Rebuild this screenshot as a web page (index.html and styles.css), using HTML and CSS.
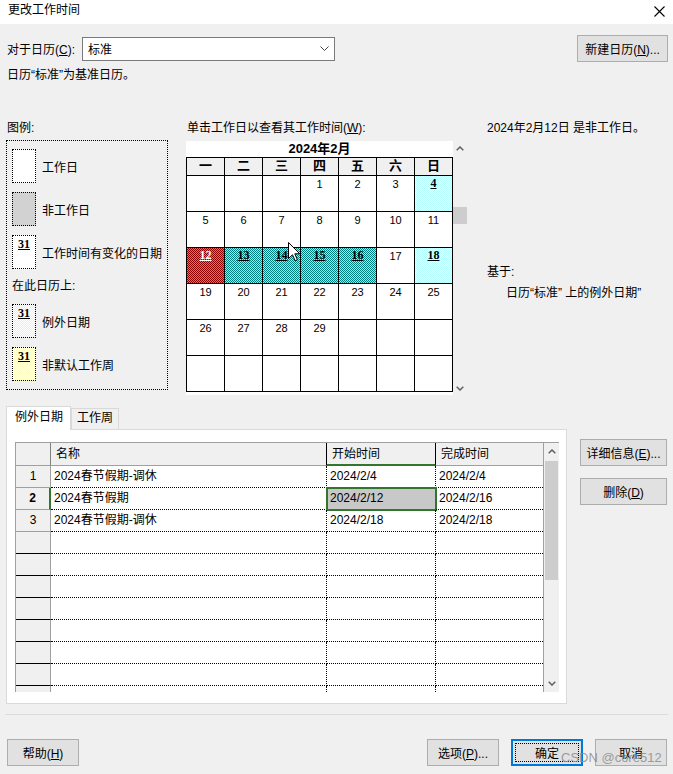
FILE: index.html
```html
<!DOCTYPE html>
<html lang="zh-CN">
<head>
  <meta charset="UTF-8" />
  <title>更改工作时间</title>
  <link rel="stylesheet" href="styles.css">
</head>
<body>
<div class="window">

  <!-- title bar -->
  <div class="titlebar">
    <span class="title">更改工作时间</span>
    <svg class="close" width="11" height="11" viewBox="0 0 11 11"><path d="M0.5 0.5 L10.5 10.5 M10.5 0.5 L0.5 10.5" stroke="#000" stroke-width="1.1" fill="none"/></svg>
  </div>

  <div class="dialog">
    <div class="cal-row">
      <span class="lbl">对于日历(<u>C</u>):</span>
      <div class="combo">
        <span>标准</span>
        <svg width="9" height="5" viewBox="0 0 9 5"><path d="M0.5 0.5 L4.5 4.5 L8.5 0.5" stroke="#444" stroke-width="1" fill="none"/></svg>
      </div>
      <button class="btn new-cal">新建日历(<u>N</u>)...</button>
    </div>
    <div class="note">日历“标准”为基准日历。</div>

    <div class="middle">
      <!-- legend -->
      <div class="legend-col">
        <div class="cap">图例:</div>
        <div class="legend">
          <div class="item"><span class="sw"></span>工作日</div>
          <div class="item"><span class="sw gray"></span>非工作日</div>
          <div class="item"><span class="sw"><b>31</b></span>工作时间有变化的日期</div>
          <div class="on-cal">在此日历上:</div>
          <div class="item"><span class="sw cyan"><b>31</b></span>例外日期</div>
          <div class="item"><span class="sw yellow"><b>31</b></span>非默认工作周</div>
        </div>
      </div>

      <!-- calendar -->
      <div class="cal-col">
        <div class="cap">单击工作日以查看其工作时间(<u>W</u>):</div>
        <div class="cal-wrap">
          <div class="cal">
            <div class="month">2024年2月</div>
            <div class="grid">
              <div class="wd">一</div><div class="wd">二</div><div class="wd">三</div><div class="wd">四</div><div class="wd">五</div><div class="wd">六</div><div class="wd">日</div>

              <div class="d"></div><div class="d"></div><div class="d"></div><div class="d">1</div><div class="d">2</div><div class="d">3</div><div class="d ex cyan">4</div>
              <div class="d">5</div><div class="d">6</div><div class="d">7</div><div class="d">8</div><div class="d">9</div><div class="d">10</div><div class="d">11</div>
              <div class="d ex red">12</div><div class="d ex teal">13</div><div class="d ex teal">14</div><div class="d ex teal">15</div><div class="d ex teal">16</div><div class="d">17</div><div class="d ex cyan">18</div>
              <div class="d">19</div><div class="d">20</div><div class="d">21</div><div class="d">22</div><div class="d">23</div><div class="d">24</div><div class="d">25</div>
              <div class="d">26</div><div class="d">27</div><div class="d">28</div><div class="d">29</div><div class="d"></div><div class="d"></div><div class="d"></div>
              <div class="d"></div><div class="d"></div><div class="d"></div><div class="d"></div><div class="d"></div><div class="d"></div><div class="d"></div>
            </div>
            <svg class="cursor" width="13" height="20" viewBox="0 0 13 20"><path d="M0.5 0.5 L0.5 16.5 L4.5 12.8 L7.2 18.8 L9.4 17.8 L6.8 11.8 L11.8 11.8 Z" fill="#fff" stroke="#000" stroke-width="1"/></svg>
          </div>
          <div class="cal-scroll">
            <div class="arr"><svg width="8" height="5" viewBox="0 0 8 5"><path d="M0.7 4.3 L4 1 L7.3 4.3" stroke="#606060" stroke-width="1.5" fill="none"/></svg></div>
            <div class="thumb"></div>
            <div class="fill"></div>
            <div class="arr"><svg width="8" height="5" viewBox="0 0 8 5"><path d="M0.7 0.7 L4 4 L7.3 0.7" stroke="#606060" stroke-width="1.5" fill="none"/></svg></div>
          </div>
        </div>
      </div>

      <!-- selected date info -->
      <div class="info-col">
        <div class="line">2024年2月12日 是非工作日。</div>
        <div class="line based">基于:</div>
        <div class="line indent">日历“标准” 上的例外日期”</div>
      </div>
    </div>

    <!-- exceptions tab -->
    <div class="tab-row">
      <div class="tab-area">
        <div class="tabs">
          <div class="tab active">例外日期</div>
          <div class="tab">工作周</div>
        </div>
        <div class="panel">
          <div class="tbl-box">
            <div class="tbl">
              <div class="th corner"></div>
              <div class="th">名称</div>
              <div class="th cur">开始时间</div>
              <div class="th last">完成时间</div>

              <div class="rh">1</div>
              <div class="td">2024春节假期-调休</div>
              <div class="td">2024/2/4</div>
              <div class="td last">2024/2/4</div>

              <div class="rh sel">2</div>
              <div class="td">2024春节假期</div>
              <div class="td active">2024/2/12</div>
              <div class="td last">2024/2/16</div>

              <div class="rh">3</div>
              <div class="td">2024春节假期-调休</div>
              <div class="td">2024/2/18</div>
              <div class="td last">2024/2/18</div>

              <div class="rh empty"></div><div class="td"></div><div class="td"></div><div class="td last"></div>
              <div class="rh empty"></div><div class="td"></div><div class="td"></div><div class="td last"></div>
              <div class="rh empty"></div><div class="td"></div><div class="td"></div><div class="td last"></div>
              <div class="rh empty"></div><div class="td"></div><div class="td"></div><div class="td last"></div>
              <div class="rh empty"></div><div class="td"></div><div class="td"></div><div class="td last"></div>
              <div class="rh empty"></div><div class="td"></div><div class="td"></div><div class="td last"></div>
              <div class="rh empty"></div><div class="td"></div><div class="td"></div><div class="td last"></div>
              <div class="rh empty"></div><div class="td"></div><div class="td"></div><div class="td last"></div>
            </div>
            <div class="vbar">
              <div class="arr"><svg width="8" height="5" viewBox="0 0 8 5"><path d="M0.7 4.3 L4 1 L7.3 4.3" stroke="#606060" stroke-width="1.5" fill="none"/></svg></div>
              <div class="thumb"></div>
              <div class="fill"></div>
              <div class="arr"><svg width="8" height="5" viewBox="0 0 8 5"><path d="M0.7 0.7 L4 4 L7.3 0.7" stroke="#606060" stroke-width="1.5" fill="none"/></svg></div>
            </div>
          </div>
        </div>
      </div>
      <div class="side-btns">
        <button class="btn">详细信息(<u>E</u>)...</button>
        <button class="btn">删除(<u>D</u>)</button>
      </div>
    </div>

    <div class="sep"></div>

    <div class="footer">
      <button class="btn">帮助(<u>H</u>)</button>
      <div class="footer-right">
        <button class="btn">选项(<u>P</u>)...</button>
        <button class="btn default">确定</button>
        <button class="btn">取消</button>
      </div>
    </div>
  </div>

  <div class="watermark">CSDN @core512</div>
</div>
</body>
</html>
```

FILE: styles.css
```css
* {
  box-sizing: border-box;
}

body {
  margin: 0;
  background: #f0f0f0;
  font-family: "Liberation Sans", "Noto Sans CJK SC", sans-serif;
  font-size: 12px;
  color: #000;
}

.window {
  position: relative;
  width: 673px;
  height: 774px;
  overflow: hidden;
  background: #f0f0f0;
}

/* Title bar */
.titlebar {
  height: 24px;
  background: #fff;
  display: flex;
  align-items: center;
  justify-content: space-between;
  padding: 0 8px 4px 8px;
}

.title {
  line-height: 16px;
}

.close {
  margin-top: 2px;
}

.dialog {
  padding: 11px 5px 0 6px;
}

/* Calendar selector */
.cal-row {
  display: flex;
  align-items: center;
  height: 27px;
}

.lbl {
  width: 76px;
  padding-left: 1px;
}

.combo {
  width: 253px;
  height: 24px;
  background: #fff;
  border: 1px solid #7a7a7a;
  display: flex;
  align-items: center;
  justify-content: space-between;
  padding: 0 5px 0 5px;
}

.btn {
  font: inherit;
  color: #000;
  background: #e1e1e1;
  border: 1px solid #adadad;
  height: 27px;
  width: 72px;
  padding: 0;
  position: relative;
}

.new-cal {
  margin-left: auto;
  width: 91px;
}

.note {
  margin-top: 5px;
  padding-left: 1px;
  line-height: 16px;
}

/* Middle section */
.middle {
  display: flex;
  margin-top: 37px;
  height: 275px;
}

.cap {
  line-height: 16px;
  padding-left: 1px;
}

.legend-col {
  width: 162px;
}

.legend {
  margin-top: 4px;
  height: 250px;
  border: 1px dotted #000;
  padding: 8px 5px;
  display: flex;
  flex-direction: column;
  gap: 9px;
}

.item {
  display: flex;
  align-items: center;
  height: 34px;
  gap: 6px;
}

.sw {
  width: 24px;
  height: 34px;
  flex-shrink: 0;
  border: 1px dotted #000;
  background: #fff;
  text-align: center;
  padding-top: 1px;
}

.sw b {
  font-family: "Liberation Serif", serif;
  font-size: 12px;
  line-height: 12px;
  text-decoration: underline;
}

.sw.gray {
  background: #d2d2d2;
}

.sw.cyan {
  background: repeating-conic-gradient(#c0ffff 0 25%, #fff 0 50%) 0 0 / 2px 2px;
}

.sw.yellow {
  background: repeating-conic-gradient(#ffffc8 0 25%, #fff 0 50%) 0 0 / 2px 2px;
}

.on-cal {
  height: 17px;
  line-height: 17px;
}

/* Calendar */
.cal-col {
  width: 281px;
  margin-left: 18px;
}

.cal-wrap {
  display: flex;
  margin-top: 5px;
  height: 254px;
}

.cal {
  position: relative;
  width: 267px;
  background: #fff;
}

.month {
  height: 16px;
  line-height: 16px;
  text-align: center;
  font-weight: bold;
  font-size: 13px;
}

.grid {
  display: grid;
  grid-template-columns: repeat(7, 38px);
  grid-template-rows: 18px repeat(6, 36px);
  border-top: 1px solid #000;
  border-left: 1px solid #000;
}

.grid > div {
  border-right: 1px solid #000;
  border-bottom: 1px solid #000;
  text-align: center;
}

.wd {
  font-weight: bold;
  font-size: 13px;
  line-height: 16px;
  background: #f0f0f0;
}

.d {
  font-size: 11px;
  line-height: 12px;
  padding-top: 2px;
}

.d.ex {
  font-family: "Liberation Serif", serif;
  font-weight: bold;
  font-size: 12px;
  text-decoration: underline;
  padding-top: 1px;
}

.cyan {
  background: repeating-conic-gradient(#b4ffff 0 25%, #fff 0 50%) 0 0 / 2px 2px;
}

.teal {
  background: repeating-conic-gradient(#008080 0 25%, #a0e8e8 0 50%) 0 0 / 2px 2px;
}

.red {
  background: repeating-conic-gradient(#8c0000 0 25%, #e07070 0 50%) 0 0 / 2px 2px;
  color: #fff;
}

.cursor {
  position: absolute;
  left: 102px;
  top: 101px;
}

.cal-scroll {
  width: 15px;
  display: flex;
  flex-direction: column;
}

.arr {
  height: 14px;
  display: flex;
  align-items: center;
  justify-content: center;
}

.cal-scroll .thumb {
  margin-top: 52px;
  height: 17px;
  background: #cdcdcd;
}

.fill {
  flex: 1;
}

/* Info */
.info-col {
  margin-left: 20px;
  flex: 1;
}

.line {
  line-height: 16px;
}

.based {
  margin-top: 128px;
}

.indent {
  margin-top: 5px;
  padding-left: 19px;
}

/* Tabs */
.tab-row {
  display: flex;
  gap: 13px;
  margin-top: 10px;
}

.tab-area {
  width: 561px;
}

.tabs {
  display: flex;
  align-items: flex-end;
  height: 24px;
}

.tab {
  height: 21px;
  line-height: 19px;
  padding: 0 5px;
  border: 1px solid #d9d9d9;
  border-bottom: none;
  background: #f0f0f0;
}

.tab.active {
  height: 24px;
  line-height: 21px;
  padding: 0 7px 0 8px;
  background: #fff;
  margin-bottom: -1px;
  position: relative;
  z-index: 1;
}

.panel {
  height: 275px;
  background: #fff;
  border: 1px solid #d9d9d9;
  padding: 12px 0 0 8px;
}

.tbl-box {
  display: flex;
  width: 544px;
  height: 250px;
  overflow: hidden;
  border-top: 1px solid #a0a0a0;
  border-left: 1px solid #a0a0a0;
}

.tbl {
  display: grid;
  grid-template-columns: 35px 276px 109px 107px;
  grid-template-rows: 23px;
  grid-auto-rows: 22px;
  align-content: start;
}

.tbl > div {
  line-height: 21px;
  white-space: nowrap;
  overflow: hidden;
}

.th {
  background: #f0f0f0;
  border-right: 1px solid #000;
  border-bottom: 1px solid #a0a0a0;
  padding-left: 5px;
  line-height: 22px !important;
}

.th.corner {
  border-right: 1px solid #808080;
}

.th.cur {
  border-bottom: 2px solid #31752f;
}

.rh {
  background: #f0f0f0;
  text-align: center;
  border-right: 1px solid #a0a0a0;
  border-bottom: 1px solid #a0a0a0;
}

.rh.sel {
  font-weight: bold;
  border-right: 2px solid #31752f;
}

.rh.empty {
  border-bottom: 1px solid #000;
}

.td {
  padding-left: 3px;
  border-right: 1px dotted #000;
  border-bottom: 1px dotted #000;
}

.tbl .last {
  border-right: none;
}

.td.active {
  background: #c8c8c8;
  outline: 2px solid #31752f;
  outline-offset: -1px;
}

.vbar {
  width: 16px;
  border-left: 1px solid #a0a0a0;
  background: #f0f0f0;
  display: flex;
  flex-direction: column;
}

.vbar .arr {
  height: 17px;
}

.vbar .thumb {
  margin: 1px 1px 0 1px;
  height: 119px;
  background: #cdcdcd;
}

.side-btns {
  display: flex;
  flex-direction: column;
  gap: 12px;
  padding-top: 34px;
}

.side-btns .btn {
  width: 87px;
}

/* Footer */
.sep {
  margin: 10px 0 0 -1px;
  height: 1px;
  background: #dcdcdc;
}

.footer {
  display: flex;
  margin-top: 24px;
  padding: 0 1px 0 1px;
}

.footer-right {
  margin-left: auto;
  display: flex;
  gap: 12px;
}

.btn.default {
  border: 2px solid #0078d7;
}

.btn.default::after {
  content: "";
  position: absolute;
  inset: 2px;
  border: 1px dotted #000;
}

.watermark {
  position: absolute;
  left: 561px;
  top: 750px;
  font-size: 13px;
  color: rgba(140, 140, 140, 0.85);
}
```
